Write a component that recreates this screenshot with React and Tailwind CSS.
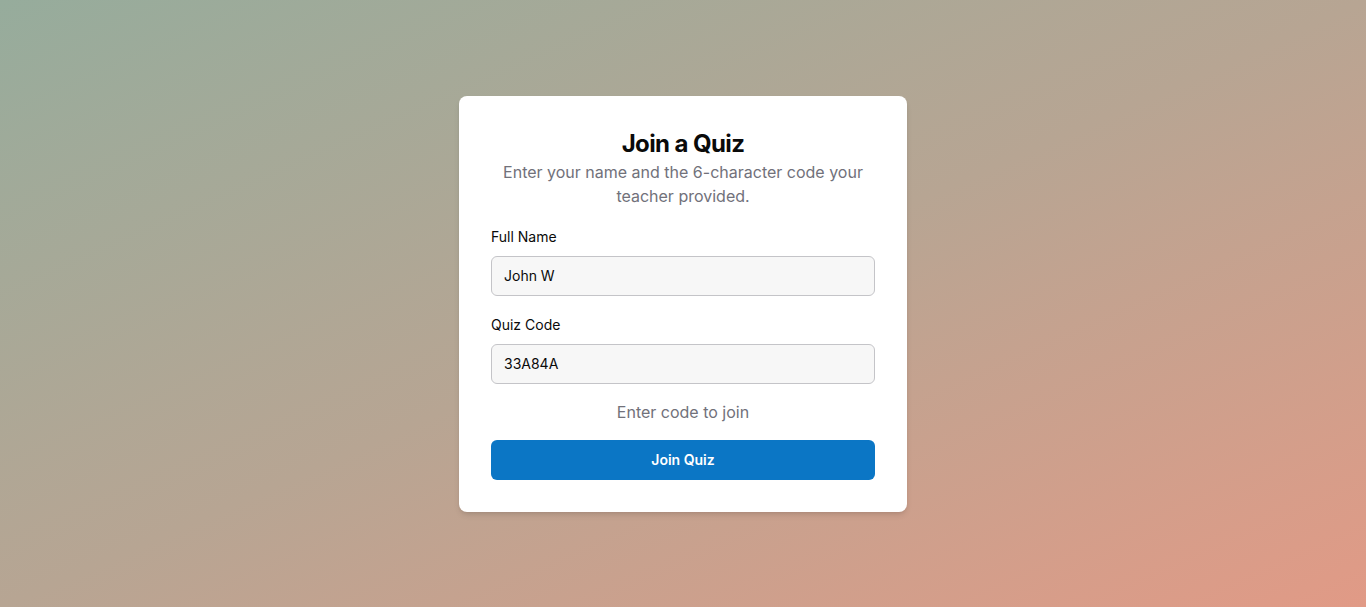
import React, { useState } from "react";

function App() {
  const [name, setName] = useState("John W");
  const [code, setCode] = useState("33A84A");

  return (
    <div
      className="min-h-screen w-full flex items-center justify-center bg-gradient-to-br from-[#96ac9c] via-[#b7a593] to-[#e19a86]"
      style={{ fontFamily: "Inter, 'Noto Sans', sans-serif" }}
    >
      <div className="w-[448px] bg-white rounded-lg shadow-md px-8 pt-8 pb-8">
        <div className="text-center">
          <h1 className="text-2xl leading-8 font-bold tracking-tight text-[#0a0a0a]">Join a Quiz</h1>
          <p className="text-base leading-6 text-[#71717a]">
            Enter your name and the 6-character code your teacher provided.
          </p>
        </div>

        <div className="mt-[19px]">
          <label className="block text-sm leading-5 font-normal text-[#0a0a0a] mb-[9px]">Full Name</label>
          <input
            type="text"
            value={name}
            onChange={(e) => setName(e.target.value)}
            className="w-full h-10 px-3 text-sm text-[#0a0a0a] bg-[#f7f7f7] border border-[#c4c4c8] rounded-md outline-none"
          />
        </div>

        <div className="mt-[19px]">
          <label className="block text-sm leading-5 font-normal text-[#0a0a0a] mb-[9px]">Quiz Code</label>
          <input
            type="text"
            value={code}
            onChange={(e) => setCode(e.target.value)}
            className="w-full h-10 px-3 text-sm text-[#0a0a0a] bg-[#f7f7f7] border border-[#c4c4c8] rounded-md outline-none"
          />
        </div>

        <p className="mt-4 text-center text-base leading-6 text-[#71717a]">Enter code to join</p>

        <button className="mt-4 w-full h-10 rounded-md bg-[#0b76c5] text-white text-sm font-semibold">
          Join Quiz
        </button>
      </div>
    </div>
  );
}

export default App;
